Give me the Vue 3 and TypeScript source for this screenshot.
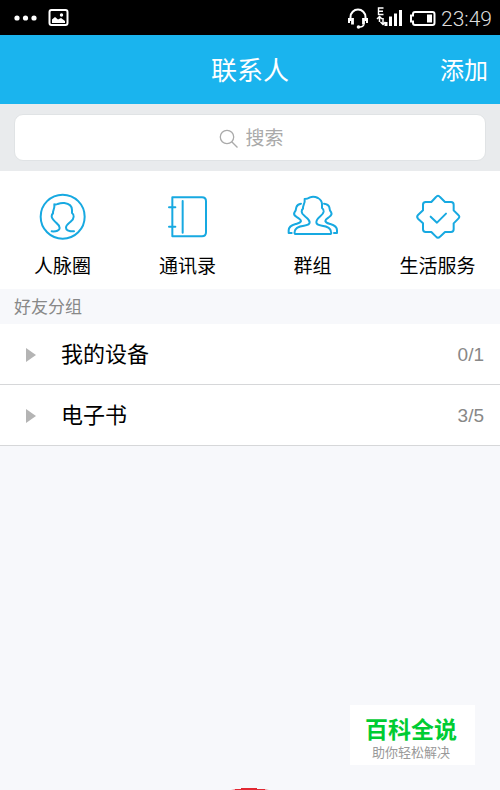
<script setup lang="ts">
import { ref } from 'vue'

interface Group {
  name: string
  online: number
  total: number
}

const query = ref('')
const shortcuts = [
  { id: 'circle', label: '人脉圈' },
  { id: 'book', label: '通讯录' },
  { id: 'groups', label: '群组' },
  { id: 'service', label: '生活服务' },
]
const groups: Group[] = [
  { name: '我的设备', online: 0, total: 1 },
  { name: '电子书', online: 3, total: 5 },
]
</script>

<template>
  <div class="screen">
    <div class="status">
      <svg class="status-left" viewBox="0 0 60 24" aria-hidden="true">
        <g fill="#fff">
          <circle cx="7" cy="12" r="2.600" /><circle cx="15.500" cy="12" r="2.600" /><circle cx="24" cy="12" r="2.600" />
          <path d="M42 16.500v-3l3-2.500 3 2.500 3-1.500 4 3v2H42z" />
          <circle cx="51.500" cy="9" r="1.700" />
        </g>
        <rect x="39.500" y="4" width="18" height="15" rx="2" fill="none" stroke="#fff" stroke-width="2" />
      </svg>
      <div class="status-right">
        <svg class="headset" viewBox="0 0 22 24" fill="none" stroke="#fff" aria-hidden="true">
          <path d="M3.500 15V11a7.500 7.500 0 0 1 15 0v4" stroke-width="2" />
          <path d="M2 12v5M20 12v5" stroke-width="2" />
          <path d="M5.500 12v6.500M16.500 12v6.500" stroke-width="2.800" />
          <path d="M17 18.500q-1 2.500-4 2.500" stroke-width="1.500" />
          <circle cx="11.500" cy="21" r="1.800" fill="#fff" stroke="none" />
        </svg>
        <svg class="signal" viewBox="0 0 26 24" fill="none" stroke="#fff" aria-hidden="true">
          <path d="M7.500 2H2.500v6.500h5M2.500 5.300h4.500" stroke-width="1.400" />
          <path d="M3.500 16v-4M1 13l2.500-2.500L6 13M7 12v6M4.500 16L7 18.500 9.500 16" stroke-width="1.500" />
          <path d="M10 20v-4M14.500 20V10.500M19.500 20V7.500M24.500 20V4" stroke-width="3" />
        </svg>
        <svg class="battery" viewBox="0 0 27 24" aria-hidden="true">
          <path d="M6 6h17.500q2 0 2 2v9q0 2-2 2H6q-2 0-2-2v-1.500H2v-6h2V8q0-2 2-2z" fill="none" stroke="#fff" stroke-width="2" />
          <rect x="18" y="8.500" width="5" height="8" fill="#fff" />
        </svg>
        <time>23:49</time>
      </div>
    </div>

    <header class="header">
      <h1>联系人</h1>
      <button type="button" class="add">添加</button>
    </header>

    <div class="search">
      <label class="search-box">
        <svg viewBox="0 0 20 20" fill="none" stroke="#aaa" stroke-width="1.300" aria-hidden="true">
          <circle cx="8" cy="8" r="6.700" /><path d="M12.700 12.700l5.800 5.800" />
        </svg>
        <input v-model="query" type="text" placeholder="搜索" aria-label="搜索" />
      </label>
    </div>

    <nav class="shortcuts">
      <a v-for="item in shortcuts" :key="item.id" href="#">
        <svg
          :viewBox="item.id === 'service' ? '74 36 168 150' : '44 36 168 150'"
          fill="none" stroke="#17a9e1" stroke-width="6" stroke-linecap="round" stroke-linejoin="round" aria-hidden="true"
        >
          <template v-if="item.id === 'circle'">
            <circle cx="127" cy="110" r="66" />
            <path d="M94 154C108 155 118 152 118 144C118 134 109 130 104 125C98 119 94 115 94 109Q94 103 98 100C97 90 104 86 102 73Q107 75 112 72Q122 68 132 69C148 71 155 80 155 90V99Q161 103 160 110C160 117 156 121 150 126C144 131 137 135 137 143C137 152 147 154 161 154" />
          </template>
          <template v-else-if="item.id === 'book'">
            <path d="M81 52H170Q182 52 182 64V157Q182 169 170 169H81ZM112 63V158M71 82H90M71 140H90" />
          </template>
          <template v-else-if="item.id === 'groups'">
            <path d="M74 162Q72 162 73 155C74 144 84 139 101 137C113 136 118 133 118 127C118 119 109 114 104 109C98 104 94 101 94 95Q94 89 98 86C97 75 105 70 103 57Q111 57 119 52Q130 48 143 54Q155 61 155 73V84Q161 88 160 95C159 101 155 105 150 109C144 114 138 119 138 127C138 133 143 136 155 137C172 139 181 144 182 155Q184 162 181 162Z" />
            <path d="M92 71Q81 72 78 82Q77 92 72 98C68 107 76 109 82 113C88 117 92 119 92 123C91 129 83 130 76 132C61 136 55 141 55 151V159H64M161 71Q174 72 177 82Q178 92 182 96C188 105 179 109 174 113C168 117 165 119 165 123C166 129 173 130 180 132C195 136 200 141 200 151V159H191" />
          </template>
          <template v-else>
            <path d="M152 51Q158 43 164 51L179 66H197Q205 66 205 74V91L219 105Q225 110 219 116L205 130V148Q205 156 197 156H179L164 170Q158 177 152 170L138 156H121Q113 156 113 148V130L98 116Q93 110 98 105L113 91V74Q113 66 121 66H138Z" />
            <path d="M136 110L155 128L182 101" />
          </template>
        </svg>
        <span>{{ item.label }}</span>
      </a>
    </nav>

    <main>
      <h2>好友分组</h2>
      <button v-for="group in groups" :key="group.name" type="button" class="row">
        <svg viewBox="0 0 10 14" aria-hidden="true"><path d="M0 0L10 7L0 14Z" fill="#b4b4b4" /></svg>
        <span class="name">{{ group.name }}</span>
        <span class="count">{{ group.online }}/{{ group.total }}</span>
      </button>
    </main>

    <svg class="arc" viewBox="0 0 38 2" aria-hidden="true">
      <path d="M0 2Q4 1 10 1H28Q34 1 38 2Z" fill="#ee7078" /><path d="M4 1H34V2H4ZM10 0H26V1H10Z" fill="#e22832" />
    </svg>

    <aside class="badge">
      <strong>百科全说</strong>
      <span>助你轻松解决</span>
    </aside>
  </div>
</template>

<style>
body {
  margin: 0;
  background: #f7f8fb;
}
</style>

<style scoped>
.screen {
  display: flex;
  flex-direction: column;
  min-height: 100vh;
  font-family: "Liberation Sans", "Noto Sans CJK SC", sans-serif;
  color: #000;
}
.screen * {
  box-sizing: border-box;
}
svg {
  display: block;
  flex: none;
}
button {
  border: 0;
  font: inherit;
  cursor: pointer;
}
.status {
  display: flex;
  justify-content: space-between;
  align-items: center;
  height: 35px;
  padding: 0 8px 0 10px;
  background: #000;
}
.status-left {
  width: 60px;
  height: 24px;
}
.status-right {
  display: flex;
  align-items: center;
  gap: 7px;
}
.headset {
  width: 22px;
  height: 24px;
}
.signal {
  width: 26px;
  height: 24px;
}
.battery {
  width: 27px;
  height: 24px;
}
time {
  margin-left: -2px;
  padding-top: 2px;
  font-family: Roboto, sans-serif;
  font-size: 21px;
  font-weight: 300;
  line-height: 24px;
  color: #ddd;
}
.header {
  display: grid;
  grid-template-columns: 1fr auto 1fr;
  align-items: center;
  height: 69px;
  padding: 3px 12px 0;
  background: #1ab4ee;
  color: #fff;
}
h1 {
  grid-column: 2;
  margin: 0;
  font-size: 26px;
  font-weight: 400;
  line-height: 36px;
}
.add {
  justify-self: end;
  padding: 0;
  background: none;
  color: #fff;
  font-size: 24px;
  line-height: 36px;
}
.search {
  padding: 10px 14px;
  background: #e9ebed;
}
.search-box {
  display: flex;
  justify-content: center;
  align-items: center;
  gap: 7px;
  height: 47px;
  padding: 3px 0 0 4px;
  border: 1px solid #e0e3e5;
  border-radius: 9px;
  background: #fff;
}
.search-box svg {
  width: 20px;
  height: 20px;
}
input {
  width: 40px;
  padding: 0;
  border: 0;
  outline: 0;
  background: none;
  font: inherit;
  font-size: 19px;
  line-height: 28px;
}
input::placeholder {
  color: #aaa;
  opacity: 1;
}
.shortcuts {
  display: grid;
  grid-template-columns: repeat(4, 1fr);
  height: 118px;
  padding-top: 21px;
  background: #fff;
}
.shortcuts a {
  display: flex;
  flex-direction: column;
  align-items: center;
  gap: 11px;
  color: #000;
  font-size: 19px;
  line-height: 28px;
  text-decoration: none;
}
.shortcuts svg {
  width: 56px;
  height: 50px;
}
h2 {
  height: 35px;
  margin: 0;
  padding: 1px 14px 0;
  color: #888;
  font-size: 17px;
  font-weight: 400;
  line-height: 35px;
}
.row {
  display: flex;
  align-items: center;
  width: 100%;
  height: 61px;
  padding: 2px 16px 0 26px;
  border-bottom: 1px solid #d6d7d9;
  background: #fff;
  color: #000;
  text-align: left;
}
.row svg {
  width: 10px;
  height: 14px;
}
.name {
  flex: 1;
  padding-left: 25px;
  font-size: 22px;
  line-height: 32px;
}
.count {
  color: #888;
  font-size: 19px;
}
.arc {
  width: 38px;
  height: 2px;
  margin: auto auto 0;
}
.badge {
  position: fixed;
  right: 25px;
  bottom: 25px;
  display: flex;
  flex-direction: column;
  align-items: center;
  width: 125px;
  padding: 11px 3px 3px 0;
  background: #fff;
}
.badge strong {
  color: #0c3;
  font-size: 23px;
  line-height: 28px;
}
.badge span {
  color: #999;
  font-size: 13px;
  line-height: 18px;
}
</style>
